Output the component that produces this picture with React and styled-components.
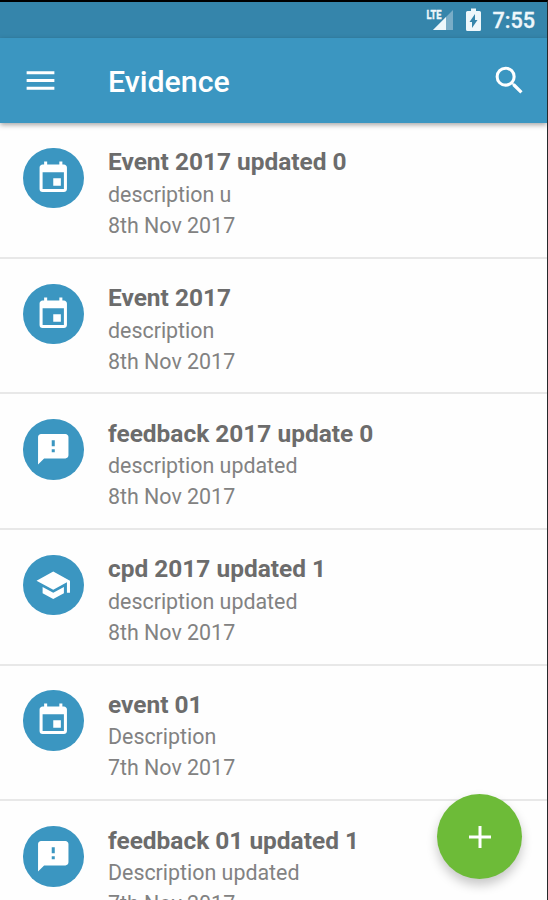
import React from 'react';
import styled, { createGlobalStyle } from 'styled-components';
import { MdEvent, MdFeedback, MdSchool, MdSearch, MdMenu } from 'react-icons/md';

const COLORS = {
  primary: '#3b96c1',
  primaryDark: '#3585ab',
  accent: '#6dbb38',
  title: '#6c6c6c',
  text: '#828282',
  divider: '#e8e8e8',
};

const GlobalStyle = createGlobalStyle`
  * {
    box-sizing: border-box;
  }

  body {
    margin: 0;
    background: #fefefe;
    font-family: Roboto, sans-serif;
  }
`;

const Screen = styled.div`
  position: relative;
  display: flex;
  flex-direction: column;
  width: 548px;
  height: 900px;
  overflow: hidden;
  border-top: 2px solid #000;
  border-right: 1px solid #26292b;
  background: #fefefe;
`;

const StatusBar = styled.div`
  display: flex;
  flex-shrink: 0;
  align-items: center;
  justify-content: flex-end;
  height: 36px;
  padding-right: 12px;
  background: ${COLORS.primaryDark};
  color: #eef7fb;
`;

const Signal = styled.svg`
  width: 28px;
  height: 24px;
  margin-right: 12px;
`;

const SignalLabel = styled.text`
  font-family: Roboto, sans-serif;
  font-size: 13px;
  font-weight: 700;
  fill: #eef7fb;
  stroke: #eef7fb;
  stroke-width: 0.4px;
`;

const Battery = styled.svg`
  width: 15px;
  height: 24px;
  margin-right: 11px;
`;

const Clock = styled.span`
  padding-top: 1px;
  font-size: 21.6px;
  font-weight: 500;
  line-height: 36px;
  -webkit-text-stroke: 0.3px currentColor;
`;

const Toolbar = styled.header`
  position: relative;
  z-index: 1;
  display: flex;
  flex-shrink: 0;
  align-items: center;
  height: 85px;
  padding: 0 19px 0 22px;
  background: ${COLORS.primary};
  box-shadow: 0 2px 5px rgba(0, 0, 0, 0.35);
  color: #fff;
`;

const IconButton = styled.button`
  display: flex;
  padding: 0;
  border: 0;
  background: none;
  color: inherit;
  font-size: 37px;
`;

const ToolbarTitle = styled.h1`
  flex: 1;
  margin: 3px 0 0 49px;
  font-size: 30.3px;
  font-weight: 500;
  line-height: 36px;
`;

const List = styled.ul`
  flex: 1;
  min-height: 0;
  margin: 0;
  padding: 0;
  list-style: none;
`;

const Row = styled.li`
  display: flex;
  height: 135.65px;
  padding: 24.9px 23px 0;
  border-bottom: 2px solid ${COLORS.divider};
`;

const Avatar = styled.div`
  display: flex;
  flex-shrink: 0;
  align-items: center;
  justify-content: center;
  width: 60.5px;
  height: 60.5px;
  margin-right: 24.5px;
  border-radius: 50%;
  background: ${COLORS.primary};
  color: #fff;
  font-size: 36.5px;
`;

const RowTitle = styled.h2`
  margin: -1.5px 0 0.5px;
  font-size: 24.45px;
  font-weight: 700;
  line-height: 32px;
  color: ${COLORS.title};
`;

const RowText = styled.p`
  margin: 0;
  font-size: 21.4px;
  line-height: 31px;
  color: ${COLORS.text};
`;

const Fab = styled.button`
  position: absolute;
  right: 25px;
  bottom: 21px;
  display: flex;
  align-items: center;
  justify-content: center;
  width: 85px;
  height: 85px;
  padding: 0;
  border: 0;
  border-radius: 50%;
  background: ${COLORS.accent};
  box-shadow: 0 6px 11px rgba(0, 0, 0, 0.22);
`;

const ICONS = {
  event: MdEvent,
  feedback: MdFeedback,
  cpd: MdSchool,
};

const ITEMS = [
  { type: 'event', title: 'Event 2017 updated 0', description: 'description u', date: '8th Nov 2017' },
  { type: 'event', title: 'Event 2017', description: 'description', date: '8th Nov 2017' },
  { type: 'feedback', title: 'feedback 2017 update 0', description: 'description updated', date: '8th Nov 2017' },
  { type: 'cpd', title: 'cpd 2017 updated 1', description: 'description updated', date: '8th Nov 2017' },
  { type: 'event', title: 'event 01', description: 'Description', date: '7th Nov 2017' },
  { type: 'feedback', title: 'feedback 01 updated 1', description: 'Description updated', date: '7th Nov 2017' },
];

const EvidenceRow = ({ type, title, description, date }) => {
  const TypeIcon = ICONS[type];
  return (
    <Row>
      <Avatar>
        <TypeIcon />
      </Avatar>
      <div>
        <RowTitle>{title}</RowTitle>
        <RowText>{description}</RowText>
        <RowText>{date}</RowText>
      </div>
    </Row>
  );
};

const App = () => (
  <>
    <GlobalStyle />
    <Screen>
      <StatusBar>
        <Signal viewBox="0 0 28 24">
          <path d="M27 2v20H7z" fill="#79adc7" />
          <path d="M20 9v13H7z" fill="#eef7fb" />
          <path d="M0 0h16v11H0z" fill={COLORS.primaryDark} />
          <SignalLabel x="0.5" y="10.5" textLength="15" lengthAdjust="spacingAndGlyphs">LTE</SignalLabel>
        </Signal>
        <Battery viewBox="0 0 15 24">
          <path
            d="M5 0.5h5v2.5h3.5a1.5 1.5 0 0 1 1.5 1.5v17a1.5 1.5 0 0 1-1.5 1.5h-12a1.5 1.5 0 0 1-1.5-1.5v-17a1.5 1.5 0 0 1 1.5-1.5H5z"
            fill="#eef7fb"
          />
          <path d="M9 6v6h2.5L6 20v-6H3.5z" fill={COLORS.primaryDark} />
        </Battery>
        <Clock>7:55</Clock>
      </StatusBar>
      <Toolbar>
        <IconButton aria-label="Menu">
          <MdMenu />
        </IconButton>
        <ToolbarTitle>Evidence</ToolbarTitle>
        <IconButton aria-label="Search">
          <MdSearch />
        </IconButton>
      </Toolbar>
      <List>
        {ITEMS.map((item) => (
          <EvidenceRow key={item.title} {...item} />
        ))}
      </List>
      <Fab aria-label="Add">
        <svg width="24" height="24" viewBox="0 0 24 24">
          <path d="M12 1v22M1 12h22" stroke="#fff" strokeWidth="3" />
        </svg>
      </Fab>
    </Screen>
  </>
);

export default App;
